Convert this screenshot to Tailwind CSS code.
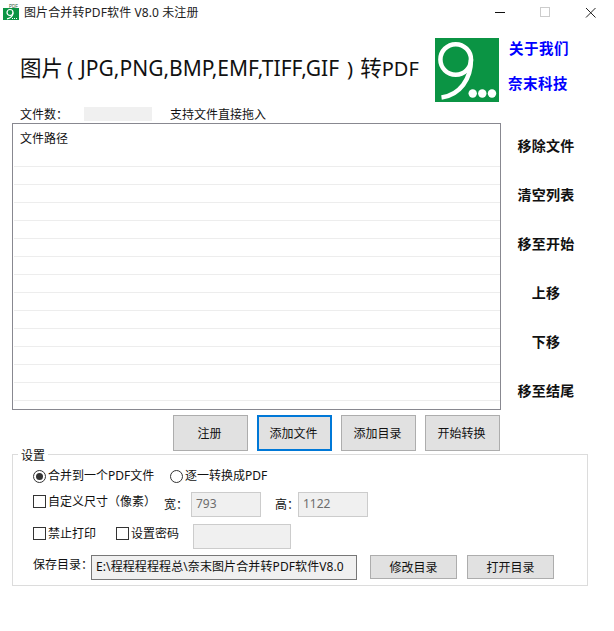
<!DOCTYPE html>
<html>
<head>
<meta charset="utf-8">
<script src="https://cdn.jsdelivr.net/npm/@tailwindcss/browser@4"></script>
</head>
<body class="bg-white">
<div class="w-[614px] h-[631px] bg-white overflow-hidden text-[#111] text-[12px] font-['Noto_Sans','Noto_Sans_CJK_SC',sans-serif]">
  <!-- title bar -->
  <div class="h-[24px] flex items-center relative">
    <svg class="ml-[3px] mt-[1px] w-[16px] h-[17px]" viewBox="0 0 16 17"><text x="6" y="3.500" font-size="4.500" fill="#2a5a3a" font-family="Liberation Sans">PDF</text><rect y="4" width="16" height="12" fill="#0b9444"/><circle cx="7" cy="8.500" r="3" fill="none" stroke="#fff" stroke-width="1.200"/><path d="M10 8.500C10 11.500 8 14 4 14.800" fill="none" stroke="#fff" stroke-width="1.200"/><path d="M9 14.500h6" stroke="#fff" stroke-width="1.200" stroke-dasharray="1 1"/></svg>
    <span class="ml-[5px] mt-[1px] text-[12px] leading-[16px] text-[#222] tracking-[0.100px]">图片合并转PDF软件 V8.0 未注册</span>
    <div class="absolute top-0 left-[495px] flex items-start">
      <svg class="w-[101px] h-[20px]" viewBox="0 0 101 20">
        <path d="M0 12.500H10" stroke="#111" stroke-width="1"/>
        <rect x="45.500" y="7.500" width="9" height="9" fill="none" stroke="#ccc"/>
        <path d="M91 8L100.500 17.500M100.500 8L91 17.500" stroke="#222" stroke-width="1"/>
      </svg>
    </div>
  </div>
  <!-- header -->
  <div class="h-[80px] flex pl-[20px] pt-[14px]">
    <div class="w-[415px] pt-[15px] text-[21.500px] leading-[30px] text-[#111] whitespace-nowrap">图片<span class="text-[20.300px] ml-[4px] mr-[7px]">(</span><span class="text-[21px]">JPG,PNG,BMP,EMF,TIFF,GIF</span><span class="text-[20.300px] ml-[8px] mr-[7px]">)</span>转<span class="text-[20px]">PDF</span></div>
    <svg class="w-[64px] h-[64px] shrink-0" viewBox="0 0 64 64">
      <rect width="64" height="64" fill="#0b9444"/>
      <circle cx="20.700" cy="21.500" r="15.300" fill="none" stroke="#fff" stroke-width="4.500"/>
      <path d="M36 21.500C36 41 25 57 6.500 59.500" fill="none" stroke="#fff" stroke-width="4.500"/>
      <circle cx="37.700" cy="55.500" r="4.200" fill="#fff"/><circle cx="47.300" cy="55.500" r="4.200" fill="#fff"/><circle cx="57" cy="55.500" r="4.200" fill="#fff"/>
    </svg>
    <div class="ml-[10px] flex flex-col gap-[15px] text-[14.500px] leading-[20px] font-bold text-[#0000ff] tracking-[0.500px]">
      <span>关于我们</span>
      <span class="-ml-[1px]">奈末科技</span>
    </div>
  </div>
  <!-- count row -->
  <div class="h-[19px] flex items-center pl-[20px]">
    <span class="w-[64px] leading-[16px] mt-[3px]">文件数：</span>
    <div class="w-[68px] h-[14px] bg-[#f0f0f0]"></div>
    <span class="ml-[18px] mt-[3px] leading-[16px]">支持文件直接拖入</span>
  </div>
  <!-- main -->
  <div class="flex pl-[12px]">
    <div class="w-[489px] h-[287px] border border-[#888890] overflow-hidden pl-[1px]">
      <div class="h-[43px] pl-[6px] pt-[6px] leading-[18px] border-b border-[#ededed]">文件路径</div>
      <div class="h-[18px] border-b border-[#ededed]"></div>
      <div class="h-[18px] border-b border-[#ededed]"></div>
      <div class="h-[18px] border-b border-[#ededed]"></div>
      <div class="h-[18px] border-b border-[#ededed]"></div>
      <div class="h-[18px] border-b border-[#ededed]"></div>
      <div class="h-[18px] border-b border-[#ededed]"></div>
      <div class="h-[18px] border-b border-[#ededed]"></div>
      <div class="h-[18px] border-b border-[#ededed]"></div>
      <div class="h-[18px] border-b border-[#ededed]"></div>
      <div class="h-[18px] border-b border-[#ededed]"></div>
      <div class="h-[18px] border-b border-[#ededed]"></div>
      <div class="h-[18px] border-b border-[#ededed]"></div>
      <div class="h-[18px] border-b border-[#ededed]"></div>
    </div>
    <div class="w-[90px] pt-[13px] flex flex-col items-center gap-[29px] text-[14px] leading-[20px] font-bold tracking-[0.300px]">
      <span>移除文件</span>
      <span>清空列表</span>
      <span>移至开始</span>
      <span>上移</span>
      <span>下移</span>
      <span>移至结尾</span>
    </div>
  </div>
  <!-- buttons -->
  <div class="flex pl-[173px] mt-[5px] gap-[9px]">
    <div class="w-[75px] h-[36px] pt-[2px] pr-[2px] bg-[#e1e1e1] border border-[#adadad] flex items-center justify-center">注册</div>
    <div class="w-[75px] h-[36px] pt-[2px] pr-[2px] bg-[#e1e1e1] border-2 border-[#0078d7] flex items-center justify-center">添加文件</div>
    <div class="w-[75px] h-[36px] pt-[2px] pr-[2px] bg-[#e1e1e1] border border-[#adadad] flex items-center justify-center">添加目录</div>
    <div class="w-[75px] h-[36px] pt-[2px] pr-[2px] bg-[#e1e1e1] border border-[#adadad] flex items-center justify-center">开始转换</div>
  </div>
  <!-- settings -->
  <div class="relative ml-[12px] mt-[3px] w-[576px] h-[132px] border border-[#dcdcdc] pl-[20px]">
    <span class="absolute -top-[7px] left-[5px] bg-white px-[3px] leading-[16px]">设置</span>
    <div class="flex items-center h-[16px] mt-[13px]">
      <span class="w-[13px] h-[13px] rounded-full border border-[#333] flex items-center justify-center"><span class="w-[7px] h-[7px] rounded-full bg-[#333]"></span></span>
      <span class="ml-[2px] w-[122px] leading-[16px]">合并到一个PDF文件</span>
      <span class="w-[13px] h-[13px] rounded-full border border-[#333]"></span>
      <span class="ml-[2px] leading-[16px]">逐一转换成PDF</span>
    </div>
    <div class="flex items-center h-[26px] mt-[7px]">
      <span class="w-[13px] h-[13px] border border-[#333] -mt-[6px]"></span>
      <span class="ml-[2px] w-[116px] leading-[16px] -mt-[5px]">自定义尺寸（像素）</span>
      <span class="w-[27px] mt-[2px]">宽：</span>
      <div class="w-[70px] h-[25px] bg-[#f0f0f0] border border-[#ccc] pl-[4px] leading-[21px] text-[#6d6d6d]">793</div>
      <span class="ml-[14px] w-[23px] mt-[2px]">高：</span>
      <div class="w-[70px] h-[25px] bg-[#f0f0f0] border border-[#ccc] pl-[4px] leading-[21px] text-[#6d6d6d]">1122</div>
    </div>
    <div class="flex items-center h-[26px] mt-[6px]">
      <span class="w-[13px] h-[13px] border border-[#333] -mt-[6px]"></span>
      <span class="ml-[2px] w-[68px] leading-[16px] -mt-[5px]">禁止打印</span>
      <span class="w-[13px] h-[13px] border border-[#333] -mt-[6px]"></span>
      <span class="ml-[2px] w-[62px] leading-[16px] -mt-[5px]">设置密码</span>
      <div class="w-[98px] h-[25px] bg-[#f0f0f0] border border-[#ccc]"></div>
    </div>
    <div class="flex items-center h-[26px] mt-[5px]">
      <span class="w-[58px] -mt-[5px] leading-[16px] whitespace-nowrap">保存目录：</span>
      <div class="w-[266px] h-[25px] bg-[#f0f0f0] border border-[#777] pl-[4px] leading-[22px] whitespace-nowrap overflow-hidden tracking-[0.100px]">E:\程程程程程总\奈末图片合并转PDF软件V8.0</div>
      <div class="ml-[13px] w-[87px] h-[24px] pt-[2px] bg-[#e1e1e1] border border-[#adadad] flex items-center justify-center">修改目录</div>
      <div class="ml-[10px] w-[87px] h-[24px] pt-[2px] bg-[#e1e1e1] border border-[#adadad] flex items-center justify-center">打开目录</div>
    </div>
  </div>
</div>
</body>
</html>
